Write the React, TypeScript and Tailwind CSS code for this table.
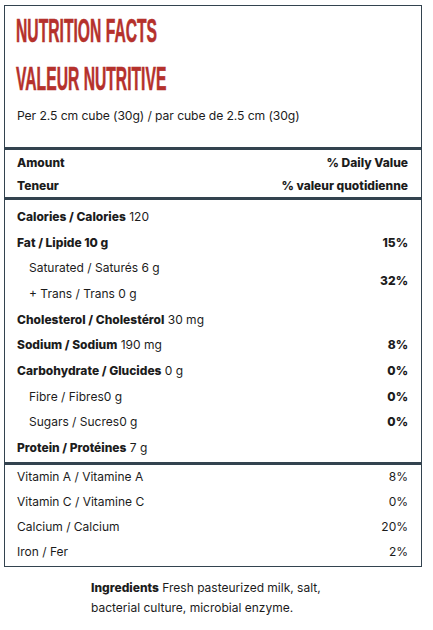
const nutrients = [
  { label: 'Calories / Calories', amount: '120', dv: '' },
  { label: 'Fat / Lipide 10 g', amount: '', dv: '15%' },
];

const lower = [
  { label: 'Cholesterol / Cholestérol', amount: '30 mg', dv: '', sub: false },
  { label: 'Sodium / Sodium', amount: '190 mg', dv: '8%', sub: false },
  { label: 'Carbohydrate / Glucides', amount: '0 g', dv: '0%', sub: false },
  { label: 'Fibre / Fibres', amount: '0 g', dv: '0%', sub: true },
  { label: 'Sugars / Sucres', amount: '0 g', dv: '0%', sub: true },
  { label: 'Protein / Protéines', amount: '7 g', dv: '', sub: false },
];

const vitamins = [
  { name: 'Vitamin A / Vitamine A', value: '8%' },
  { name: 'Vitamin C / Vitamine C', value: '0%' },
  { name: 'Calcium / Calcium', value: '20%' },
  { name: 'Iron / Fer', value: '2%' },
];

export default function App() {
  return (
    <div className="w-[433px] h-[630px] bg-white pt-[5px] pl-[4px] font-['Inter',sans-serif] text-[#1c1c1c]">
      <div className="w-[418px] border border-[#33434f]">
        {/* heading */}
        <div className="h-[141px] pl-[11px] pt-[8px]">
          <h1 className="h-[48px] text-[33px] leading-[33px] font-bold text-[#b5312c] uppercase font-['Liberation_Sans',sans-serif] whitespace-nowrap origin-left scale-x-[0.475] [-webkit-text-stroke:0.6px_#b5312c]">
            Nutrition Facts
          </h1>
          <h2 className="h-[44px] text-[33px] leading-[33px] font-bold text-[#b5312c] uppercase font-['Liberation_Sans',sans-serif] whitespace-nowrap origin-left scale-x-[0.475] [-webkit-text-stroke:0.6px_#b5312c]">
            Valeur Nutritive
          </h2>
          <p className="pl-[1px] text-[12.2px] leading-[20px] tracking-[-0.1px]">
            Per 2.5 cm cube (30g) / par cube de 2.5 cm (30g)
          </p>
        </div>

        {/* column heads */}
        <div className="border-t-[3px] border-b-[3px] border-[#33434f] pt-[1px] pl-[12px] pr-[13px] text-[12px] font-extrabold">
          <div className="flex h-[23px] items-center justify-between">
            <span>Amount</span>
            <span>% Daily Value</span>
          </div>
          <div className="flex h-[23px] items-center justify-between">
            <span>Teneur</span>
            <span>% valeur quotidienne</span>
          </div>
        </div>

        {/* nutrients */}
        <div className="pt-[4px] pb-[1px] pl-[12px] pr-[13px] text-[12px]">
          {nutrients.map((n) => (
            <div key={n.label} className="flex h-[25.7px] items-center justify-between">
              <span>
                <span className="font-extrabold">{n.label}</span> {n.amount}
              </span>
              <span className="font-extrabold">{n.dv}</span>
            </div>
          ))}
          <div className="flex h-[51.4px] items-center justify-between">
            <div className="pl-[12px]">
              <div className="flex h-[25.7px] items-center">Saturated / Saturés 6 g</div>
              <div className="flex h-[25.7px] items-center">+ Trans / Trans 0 g</div>
            </div>
            <span className="font-extrabold">32%</span>
          </div>
          {lower.map((n) => (
            <div key={n.label} className="flex h-[25.7px] items-center justify-between">
              {n.sub ? (
                <span className="pl-[12px]">
                  {n.label}
                  {n.amount}
                </span>
              ) : (
                <span>
                  <span className="font-extrabold">{n.label}</span> {n.amount}
                </span>
              )}
              <span className="font-extrabold">{n.dv}</span>
            </div>
          ))}
        </div>

        {/* vitamins */}
        <div className="border-t-[3px] border-[#33434f] pb-[1px] pl-[12px] pr-[13px] text-[12px]">
          {vitamins.map((v) => (
            <div key={v.name} className="flex h-[25px] items-center justify-between">
              <span>{v.name}</span>
              <span>{v.value}</span>
            </div>
          ))}
        </div>
      </div>

      <p className="ml-[87px] mt-[11px] w-[250px] text-[12px] leading-[20px]">
        <span className="font-extrabold">Ingredients</span> Fresh pasteurized milk, salt,
        <br />
        bacterial culture, microbial enzyme.
      </p>
    </div>
  );
}
